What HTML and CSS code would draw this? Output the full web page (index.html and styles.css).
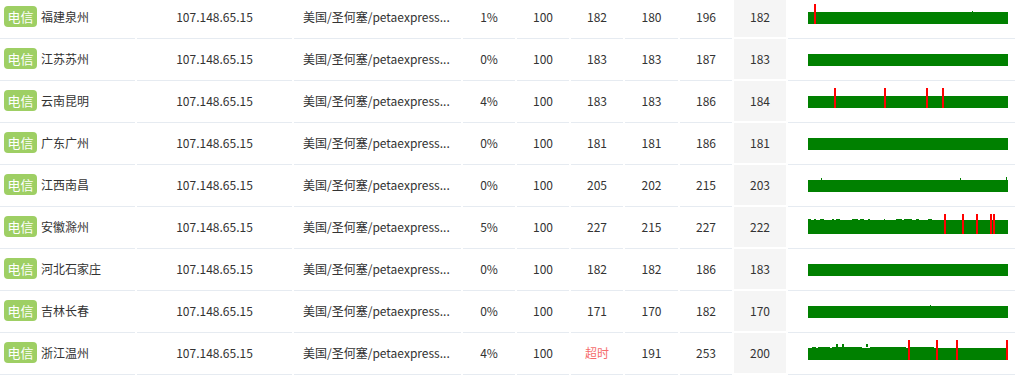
FILE: index.html
```html
<!DOCTYPE html>
<html lang="zh-CN">
<head>
<meta charset="utf-8">
<title>Ping</title>
<link rel="stylesheet" href="styles.css">
</head>
<body>
<div class="table">
  <div class="row">
    <div class="cell node"><span class="isp">电信</span><span class="city">福建泉州</span></div>
    <div class="cell">107.148.65.15</div>
    <div class="cell loc" title="美国/圣何塞/petaexpress.com">美国/圣何塞/petaexpress...</div>
    <div class="cell">1%</div><div class="cell">100</div><div class="cell">182</div><div class="cell">180</div><div class="cell">196</div><div class="cell avg">182</div>
    <div class="cell chart"><svg width="200" height="20" viewBox="0 0 200 20"><rect x="0" y="8" width="200" height="12" fill="#008000"/><rect x="164" y="7" width="1" height="1" fill="#008000"/><rect x="6" y="0" width="2" height="20" fill="#ff0000"/></svg></div>
  </div>
  <div class="row">
    <div class="cell node"><span class="isp">电信</span><span class="city">江苏苏州</span></div>
    <div class="cell">107.148.65.15</div>
    <div class="cell loc" title="美国/圣何塞/petaexpress.com">美国/圣何塞/petaexpress...</div>
    <div class="cell">0%</div><div class="cell">100</div><div class="cell">183</div><div class="cell">183</div><div class="cell">187</div><div class="cell avg">183</div>
    <div class="cell chart"><svg width="200" height="20" viewBox="0 0 200 20"><rect x="0" y="8" width="200" height="12" fill="#008000"/></svg></div>
  </div>
  <div class="row">
    <div class="cell node"><span class="isp">电信</span><span class="city">云南昆明</span></div>
    <div class="cell">107.148.65.15</div>
    <div class="cell loc" title="美国/圣何塞/petaexpress.com">美国/圣何塞/petaexpress...</div>
    <div class="cell">4%</div><div class="cell">100</div><div class="cell">183</div><div class="cell">183</div><div class="cell">186</div><div class="cell avg">184</div>
    <div class="cell chart"><svg width="200" height="20" viewBox="0 0 200 20"><rect x="0" y="8" width="200" height="12" fill="#008000"/><rect x="26" y="0" width="2" height="20" fill="#ff0000"/><rect x="76" y="0" width="2" height="20" fill="#ff0000"/><rect x="118" y="0" width="2" height="20" fill="#ff0000"/><rect x="134" y="0" width="2" height="20" fill="#ff0000"/></svg></div>
  </div>
  <div class="row">
    <div class="cell node"><span class="isp">电信</span><span class="city">广东广州</span></div>
    <div class="cell">107.148.65.15</div>
    <div class="cell loc" title="美国/圣何塞/petaexpress.com">美国/圣何塞/petaexpress...</div>
    <div class="cell">0%</div><div class="cell">100</div><div class="cell">181</div><div class="cell">181</div><div class="cell">186</div><div class="cell avg">181</div>
    <div class="cell chart"><svg width="200" height="20" viewBox="0 0 200 20"><rect x="0" y="8" width="200" height="12" fill="#008000"/></svg></div>
  </div>
  <div class="row">
    <div class="cell node"><span class="isp">电信</span><span class="city">江西南昌</span></div>
    <div class="cell">107.148.65.15</div>
    <div class="cell loc" title="美国/圣何塞/petaexpress.com">美国/圣何塞/petaexpress...</div>
    <div class="cell">0%</div><div class="cell">100</div><div class="cell">205</div><div class="cell">202</div><div class="cell">215</div><div class="cell avg">203</div>
    <div class="cell chart"><svg width="200" height="20" viewBox="0 0 200 20"><rect x="0" y="8" width="200" height="12" fill="#008000"/><rect x="13" y="6" width="1" height="2" fill="#008000"/><rect x="152" y="6" width="1" height="2" fill="#008000"/><rect x="198" y="5" width="1" height="3" fill="#008000"/></svg></div>
  </div>
  <div class="row">
    <div class="cell node"><span class="isp">电信</span><span class="city">安徽滁州</span></div>
    <div class="cell">107.148.65.15</div>
    <div class="cell loc" title="美国/圣何塞/petaexpress.com">美国/圣何塞/petaexpress...</div>
    <div class="cell">5%</div><div class="cell">100</div><div class="cell">227</div><div class="cell">215</div><div class="cell">227</div><div class="cell avg">222</div>
    <div class="cell chart"><svg width="200" height="20" viewBox="0 0 200 20"><rect x="0" y="6" width="200" height="14" fill="#008000"/><g fill="#008000"><rect x="0" y="5" width="3" height="1"/><rect x="6" y="5" width="2" height="1"/><rect x="12" y="5" width="4" height="1"/><rect x="24" y="5" width="2" height="1"/><rect x="28" y="5" width="4" height="1"/><rect x="44" y="5" width="6" height="1"/><rect x="52" y="5" width="4" height="1"/><rect x="60" y="5" width="2" height="1"/><rect x="76" y="5" width="1" height="1"/><rect x="88" y="5" width="6" height="1"/><rect x="96" y="5" width="8" height="1"/><rect x="108" y="5" width="3" height="1"/><rect x="120" y="5" width="4" height="1"/></g><g fill="#ff0000"><rect x="136" y="0" width="2" height="20"/><rect x="154" y="0" width="2" height="20"/><rect x="168" y="0" width="2" height="20"/><rect x="182" y="0" width="2" height="20"/><rect x="185" y="0" width="2" height="20"/></g></svg></div>
  </div>
  <div class="row">
    <div class="cell node"><span class="isp">电信</span><span class="city">河北石家庄</span></div>
    <div class="cell">107.148.65.15</div>
    <div class="cell loc" title="美国/圣何塞/petaexpress.com">美国/圣何塞/petaexpress...</div>
    <div class="cell">0%</div><div class="cell">100</div><div class="cell">182</div><div class="cell">182</div><div class="cell">186</div><div class="cell avg">183</div>
    <div class="cell chart"><svg width="200" height="20" viewBox="0 0 200 20"><rect x="0" y="8" width="200" height="12" fill="#008000"/></svg></div>
  </div>
  <div class="row">
    <div class="cell node"><span class="isp">电信</span><span class="city">吉林长春</span></div>
    <div class="cell">107.148.65.15</div>
    <div class="cell loc" title="美国/圣何塞/petaexpress.com">美国/圣何塞/petaexpress...</div>
    <div class="cell">0%</div><div class="cell">100</div><div class="cell">171</div><div class="cell">170</div><div class="cell">182</div><div class="cell avg">170</div>
    <div class="cell chart"><svg width="200" height="20" viewBox="0 0 200 20"><rect x="0" y="8" width="200" height="12" fill="#008000"/><rect x="122" y="7" width="1" height="1" fill="#008000"/></svg></div>
  </div>
  <div class="row">
    <div class="cell node"><span class="isp">电信</span><span class="city">浙江温州</span></div>
    <div class="cell">107.148.65.15</div>
    <div class="cell loc" title="美国/圣何塞/petaexpress.com">美国/圣何塞/petaexpress...</div>
    <div class="cell">4%</div><div class="cell">100</div><div class="cell timeout">超时</div><div class="cell">191</div><div class="cell">253</div><div class="cell avg">200</div>
    <div class="cell chart"><svg width="200" height="20" viewBox="0 0 200 20"><rect x="0" y="8" width="200" height="12" fill="#008000"/><g fill="#008000"><rect x="4" y="7" width="4" height="1"/><rect x="10" y="7" width="12" height="1"/><rect x="24" y="7" width="30" height="1"/><rect x="28" y="4" width="2" height="3"/><rect x="34" y="4" width="2" height="3"/><rect x="58" y="4" width="2" height="3"/><rect x="62" y="7" width="36" height="1"/><rect x="102" y="7" width="24" height="1"/><rect x="148" y="6" width="2" height="2"/></g><g fill="#ff0000"><rect x="100" y="0" width="2" height="20"/><rect x="128" y="0" width="2" height="20"/><rect x="148" y="0" width="2" height="20"/><rect x="198" y="0" width="2" height="20"/></g></svg></div>
  </div>
</div>
</body>
</html>
```
FILE: styles.css
```css
html, body {
  margin: 0;
  padding: 0;
  background: #fff;
  overflow: hidden;
}
body {
  font-family: "Noto Sans CJK SC", "Noto Sans", sans-serif;
  font-size: 12px;
  color: #333;
}
.table {
  margin-top: -3px;
  width: 1015px;
}
.row {
  display: grid;
  grid-template-columns: 135px 155px 167px 52px 52px 52px 53px 52px 52px 227px;
  column-gap: 2px;
}
.cell {
  box-sizing: border-box;
  height: 42px;
  padding-bottom: 2px;
  border-bottom: 1px solid #e6ebf1;
  display: flex;
  align-items: center;
  justify-content: center;
  white-space: nowrap;
}
.node {
  justify-content: flex-start;
  padding-left: 4px;
}
.isp {
  display: inline-block;
  background: #9ecf64;
  color: #fff;
  font-size: 13px;
  line-height: 21px;
  height: 21px;
  width: 33px;
  text-align: center;
  border-radius: 4px;
  margin-right: 4px;
}
.loc {
  justify-content: flex-start;
  padding-left: 9px;
  padding-right: 4px;
}
.avg {
  background: #f5f5f5;
  border-bottom: 2px solid #fff;
  padding-bottom: 1px;
}
.timeout {
  color: #f56c6c;
}
.chart {
  display: block;
  padding: 7px 0 0 20px;
}
.chart svg {
  display: block;
  shape-rendering: crispEdges;
}
```
